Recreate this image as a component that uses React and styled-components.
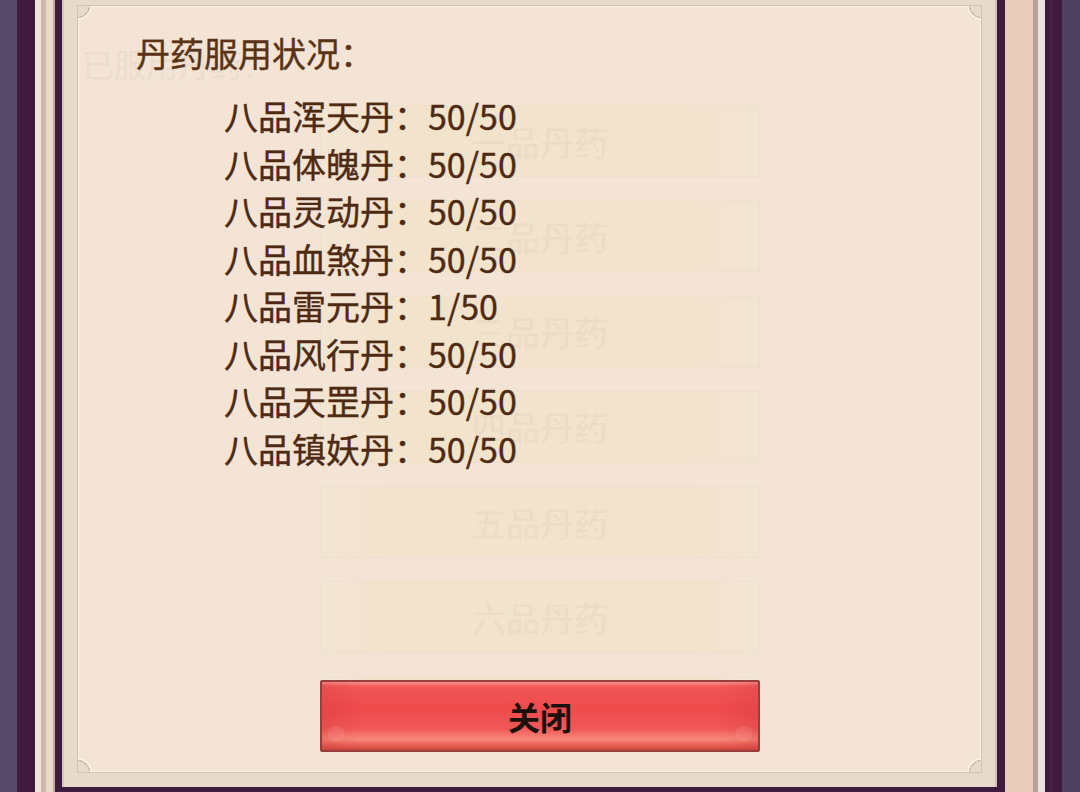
import React from 'react';
import styled, { createGlobalStyle } from 'styled-components';

const GlobalStyle = createGlobalStyle`
  html, body {
    margin: 0;
    padding: 0;
    background: #3f1c3d;
  }
  body {
    width: 1080px;
    height: 792px;
    overflow: hidden;
    font-family: "Noto Sans CJK SC", "Noto Sans", sans-serif;
  }
`;

const pills = [
  { name: '八品浑天丹', used: 50, max: 50 },
  { name: '八品体魄丹', used: 50, max: 50 },
  { name: '八品灵动丹', used: 50, max: 50 },
  { name: '八品血煞丹', used: 50, max: 50 },
  { name: '八品雷元丹', used: 1, max: 50 },
  { name: '八品风行丹', used: 50, max: 50 },
  { name: '八品天罡丹', used: 50, max: 50 },
  { name: '八品镇妖丹', used: 50, max: 50 }
];

// the dialog underneath, showing through
const grades = ['一品丹药', '二品丹药', '三品丹药', '四品丹药', '五品丹药', '六品丹药', '七品丹药', '八品丹药'];

export default function App() {
  return (
    <>
      <GlobalStyle />
      <Screen>
        <LeftEdge />
        <Middle>
          <Frame>
            <Panel>
              <Corner $at="tl" />
              <Corner $at="tr" />
              <Corner $at="bl" />
              <Corner $at="br" />

              <GhostLayer>
                <GhostTitle>已服用丹药：</GhostTitle>
                <GhostList>
                  {grades.map((g) => (
                    <GhostCard key={g}>{g}</GhostCard>
                  ))}
                </GhostList>
              </GhostLayer>

              <Content>
                <Title>丹药服用状况：</Title>
                <PillList>
                  {pills.map((p) => (
                    <PillRow key={p.name}>
                      {p.name}：{p.used}/{p.max}
                    </PillRow>
                  ))}
                </PillList>
                <CloseButton type="button">关闭</CloseButton>
              </Content>
            </Panel>
          </Frame>
          <BottomEdge />
        </Middle>
        <RightEdge />
      </Screen>
    </>
  );
}

/* Styled Components */
const Screen = styled.div`
  display: flex;
  width: 1080px;
  height: 792px;
`;

const LeftEdge = styled.div`
  flex: none;
  width: 62px;
  background: linear-gradient(
    to right,
    #574a68 0 17px,
    #3f1c3d 17px 35px,
    #efe5dc 35px 41px,
    #cbb9a8 41px 46px,
    #e6d9cb 46px 53px,
    #bca999 53px 55px,
    #3f1c3d 55px 62px
  );
`;

const RightEdge = styled.div`
  flex: none;
  width: 83px;
  background: linear-gradient(
    to right,
    #3f1c3d 0 8px,
    #e7ccbc 8px 36px,
    #b9a396 36px 41px,
    #ece2dd 41px 48px,
    #3e1b3c 48px 53px,
    #4a2346 53px 55px,
    #3e1b3c 55px 65px,
    #4c4260 65px 83px
  );
`;

const Middle = styled.div`
  flex: none;
  width: 935px;
  display: flex;
  flex-direction: column;
`;

const Frame = styled.div`
  height: 787px;
  box-sizing: border-box;
  padding: 5px 15px 14px;
  background: #e7d9cb;
  box-shadow: inset 2px 0 0 #d9c7b6, inset -2px 0 0 #d2c2b4;
`;

const BottomEdge = styled.div`
  flex: 1;
  background: #3f1c3d;
`;

const Panel = styled.div`
  position: relative;
  height: 100%;
  box-sizing: border-box;
  display: grid;
  grid-template-rows: minmax(0, 1fr);
  grid-template-columns: minmax(0, 1fr);
  overflow: hidden;
  background: #f3e4d6;
  border: 1px solid #d4c1ae;
  box-shadow: inset 0 0 0 1px #f9efe5;
`;

const cornerPos = {
  tl: 'top: -1px; left: -1px;',
  tr: 'top: -1px; right: -1px;',
  bl: 'bottom: -1px; left: -1px;',
  br: 'bottom: -1px; right: -1px;'
};
const cornerAt = {
  tl: '0 0',
  tr: '100% 0',
  bl: '0 100%',
  br: '100% 100%'
};

const Corner = styled.span`
  position: absolute;
  ${({ $at }) => cornerPos[$at]}
  width: 16px;
  height: 16px;
  z-index: 2;
  background: radial-gradient(
    circle at ${({ $at }) => cornerAt[$at]},
    #e7d9cb 0 12px,
    #d2bfac 12px 13.5px,
    #fbf2e9 13.5px 15px,
    transparent 15px
  );
`;

const GhostLayer = styled.div`
  grid-area: 1 / 1;
  min-height: 0;
  overflow: hidden;
  display: flex;
  flex-direction: column;
  padding: 37px 0 0 4px;
  pointer-events: none;
`;

const GhostTitle = styled.div`
  flex: none;
  font-size: 32px;
  line-height: 40px;
  color: #ecdccb;
`;

const GhostList = styled.div`
  flex: none;
  display: flex;
  flex-direction: column;
  gap: 23.3px;
  margin: 22px 0 0 238px;
`;

const GhostCard = styled.div`
  flex: none;
  width: 440px;
  height: 72px;
  box-sizing: border-box;
  display: flex;
  align-items: center;
  justify-content: center;
  font-size: 34px;
  color: #ebdbc7;
  background: linear-gradient(to right, #f3e5d3, #f2e3cc 20%, #f2e3cc 80%, #f3e5d3);
  border: 1px solid #efe0cd;
`;

const Content = styled.div`
  grid-area: 1 / 1;
  min-height: 0;
  z-index: 1;
  display: flex;
  flex-direction: column;
  padding: 27px 0 20px;
`;

const Title = styled.h2`
  margin: 0 0 0 58px;
  font-size: 34px;
  line-height: 40px;
  font-weight: 400;
  -webkit-text-stroke: 0.4px #5a3315;
  color: #5a3315;
`;

const PillList = styled.ul`
  list-style: none;
  margin: 19px 0 0;
  padding: 0 0 0 146px;
`;

const PillRow = styled.li`
  font-size: 34px;
  line-height: 47.5px;
  font-weight: 400;
  -webkit-text-stroke: 0.4px #4e2a12;
  color: #4e2a12;
`;

const CloseButton = styled.button`
  margin: auto 0 0 242px;
  width: 440px;
  height: 72px;
  flex: none;
  box-sizing: border-box;
  padding: 0;
  font-family: inherit;
  font-size: 32px;
  font-weight: 700;
  color: #1c100b;
  cursor: pointer;
  border: 2px solid #983e3d;
  border-radius: 2px;
  background:
    radial-gradient(circle at 14px 52px, rgba(255, 170, 160, 0.18) 0 8px, transparent 9px),
    radial-gradient(circle at calc(100% - 14px) 52px, rgba(255, 170, 160, 0.18) 0 8px, transparent 9px),
    linear-gradient(to right, rgba(200, 50, 50, 0.25), transparent 8%, transparent 92%, rgba(200, 50, 50, 0.25)),
    linear-gradient(
      to bottom,
      #f99289 0%,
      #f25656 7%,
      #ef4a4c 40%,
      #f15756 68%,
      #f8877c 84%,
      #ec6257 92%,
      #cc463d 100%
    );
`;
